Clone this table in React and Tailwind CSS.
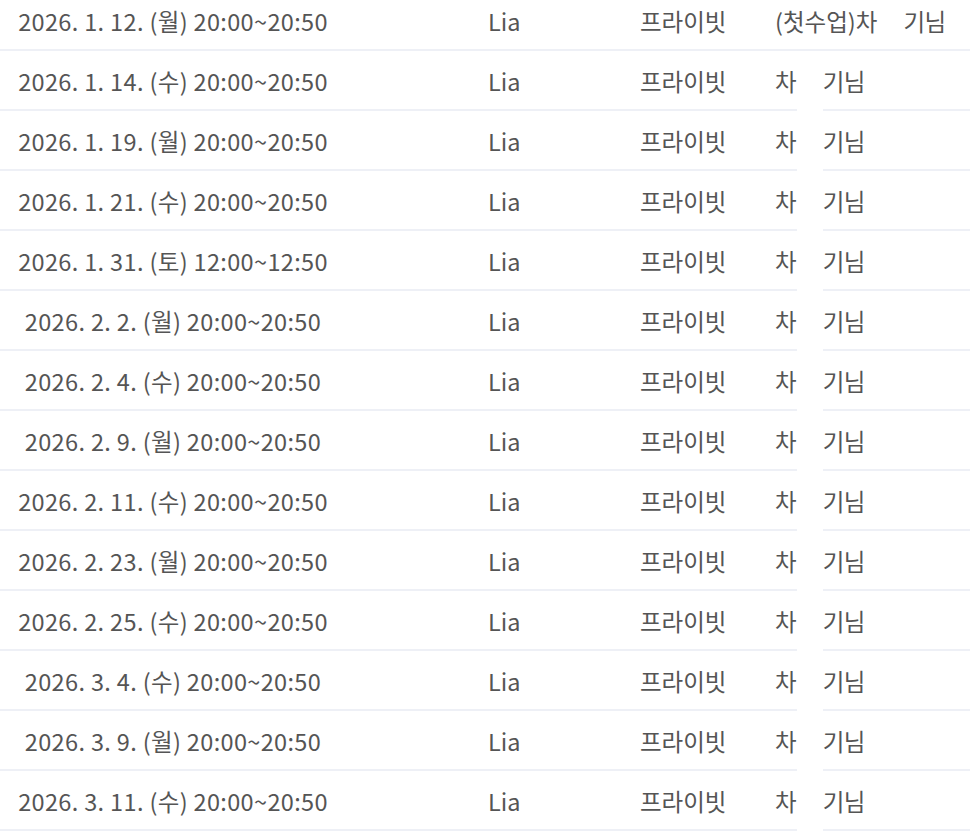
import React from 'react';

const rows = [
  ['2026. 1. 12. (월) 20:00~20:50', '(첫수업)차'],
  ['2026. 1. 14. (수) 20:00~20:50', '차'],
  ['2026. 1. 19. (월) 20:00~20:50', '차'],
  ['2026. 1. 21. (수) 20:00~20:50', '차'],
  ['2026. 1. 31. (토) 12:00~12:50', '차'],
  ['2026. 2. 2. (월) 20:00~20:50', '차'],
  ['2026. 2. 4. (수) 20:00~20:50', '차'],
  ['2026. 2. 9. (월) 20:00~20:50', '차'],
  ['2026. 2. 11. (수) 20:00~20:50', '차'],
  ['2026. 2. 23. (월) 20:00~20:50', '차'],
  ['2026. 2. 25. (수) 20:00~20:50', '차'],
  ['2026. 3. 4. (수) 20:00~20:50', '차'],
  ['2026. 3. 9. (월) 20:00~20:50', '차'],
  ['2026. 3. 11. (수) 20:00~20:50', '차'],
];

function Row({ date, lesson, first }) {
  const cell = 'h-[60px] flex items-center pt-[3px] border-b-2 border-[#eef0f6]';
  return (
    <div className="flex">
      <div className={`${cell} w-[346px] justify-center tracking-[0.35px]`}>{date}</div>
      <div className={`${cell} w-[294px] pl-[142px]`}>Lia</div>
      <div className={`${cell} w-[135px]`}>프라이빗</div>
      <div className={`${cell} flex-none`}>{lesson}</div>
      <div className={`h-[60px] w-[26px] flex-none ${first ? 'border-b-2 border-[#eef0f6]' : ''}`}></div>
      <div className={`${cell} flex-1 tracking-[-0.5px]`}>기님</div>
    </div>
  );
}

export default function App() {
  return (
    <div
      className="w-[970px] h-[831px] overflow-hidden bg-white text-[23.5px] text-[#555] leading-none"
      style={{ fontFamily: '"Noto Sans CJK KR", "Noto Sans", sans-serif' }}
    >
      <div className="-mt-[9px]">
        {rows.map(([date, lesson], i) => (
          <Row key={i} date={date} lesson={lesson} first={i === 0} />
        ))}
      </div>
    </div>
  );
}
